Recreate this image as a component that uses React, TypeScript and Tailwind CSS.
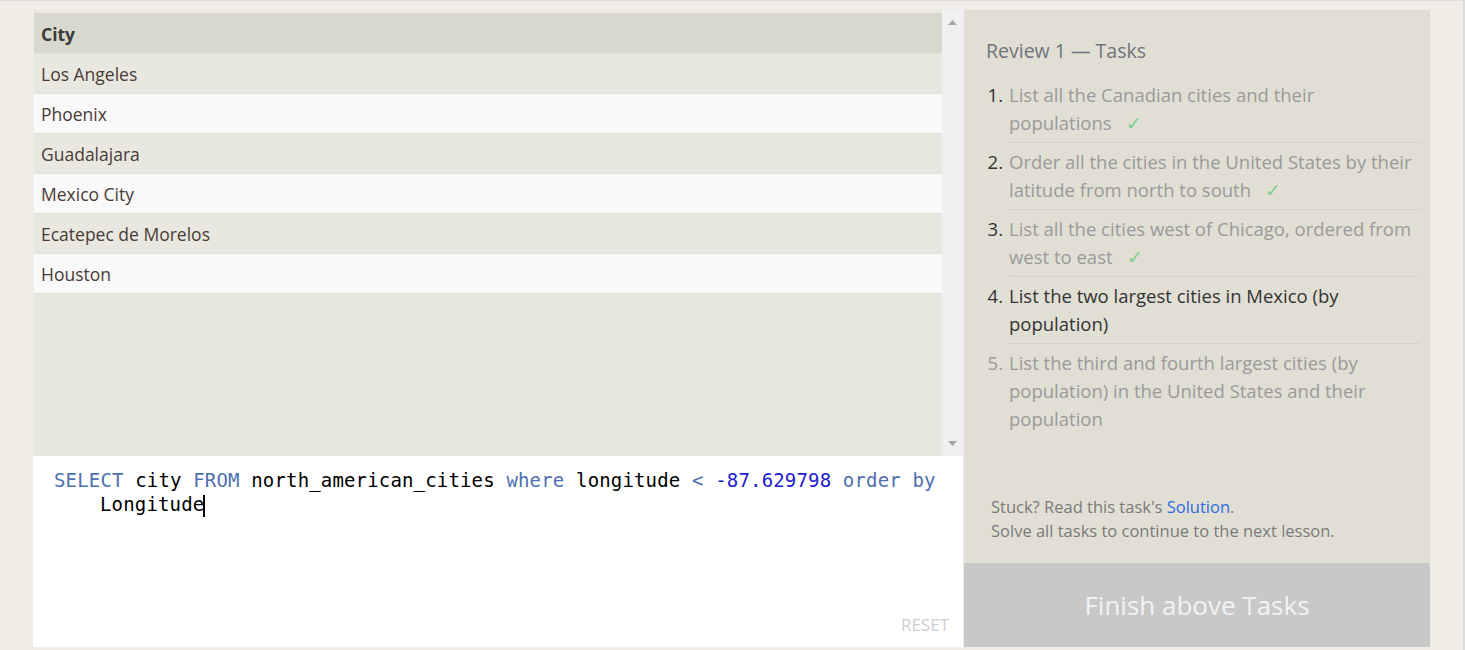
import React from "react";

const rows = ["Los Angeles", "Phoenix", "Guadalajara", "Mexico City", "Ecatepec de Morelos", "Houston"];

const tasks: { text: string; done: boolean; current?: boolean }[] = [
  { text: "List all the Canadian cities and their populations", done: true },
  { text: "Order all the cities in the United States by their latitude from north to south", done: true },
  { text: "List all the cities west of Chicago, ordered from west to east", done: true },
  { text: "List the two largest cities in Mexico (by population)", done: false, current: true },
  { text: "List the third and fourth largest cities (by population) in the United States and their population", done: false },
];

const sans = "font-['Open_Sans',sans-serif]";

export default function App() {
  return (
    <div className={`w-[1465px] h-[650px] bg-[#efede6] border-t border-[#dcdcdc] flex ${sans}`}>
      <div className="flex-1 flex pt-[9px] pl-[33px]">
        {/* Left column */}
        <div className="w-[930px] h-[637px] flex flex-col">
          <div className="h-[446px] flex">
            <div className="w-[909px] bg-[#e9e8e0] pt-[3px] border-l border-[#eeede6] flex flex-col">
              <div className="h-[41px] bg-[#d9d8cc] flex items-center pt-[2px] px-[7px] text-[17.5px] font-bold text-[#3a3a3a] border-b border-[#e2e1d9]">
                City
              </div>
              {rows.map((r, i) => (
                <div
                  key={r}
                  className={`h-[40px] flex items-center pt-[2px] px-[7px] text-[17.5px] text-[#4a3b36] border-b border-[#dfded7] ${
                    i % 2 === 0 ? "bg-[#e9e8e0]" : "bg-[#f9f9f9]"
                  }`}
                >
                  {r}
                </div>
              ))}
            </div>
            <div className="w-[21px] bg-[#f0f0f0] flex flex-col items-center justify-between py-[10px]">
              <svg width="9" height="5" viewBox="0 0 9 5">
                <polygon points="4.5,0 9,5 0,5" fill="#a3a3a3" />
              </svg>
              <svg width="9" height="5" viewBox="0 0 9 5">
                <polygon points="0,0 9,0 4.5,5" fill="#a3a3a3" />
              </svg>
            </div>
          </div>
          <div className="flex-1 bg-white relative pl-[21px] pt-[12px] font-['DejaVu_Sans_Mono',monospace] text-[19px] tracking-[0.16px] leading-[24px]">
            <div className="pl-[46px] -indent-[46px] pr-[6px]">
              <span className="text-[#4d6fae]">SELECT</span> <span className="text-black">city</span>{" "}
              <span className="text-[#4d6fae]">FROM</span> <span className="text-black">north_american_cities</span>{" "}
              <span className="text-[#4d6fae]">where</span> <span className="text-black">longitude</span>{" "}
              <span className="text-[#4d6fae]">&lt;</span> <span className="text-[#1c1cd0]">-87.629798</span>{" "}
              <span className="text-[#4d6fae]">order</span> <span className="text-[#4d6fae]">by</span>{" "}
              <span className="text-black">Longitude</span>
              <span className="inline-block w-[2px] h-[22px] bg-black align-middle -ml-[1px]"></span>
            </div>
            <div className={`absolute right-[14px] bottom-[10px] text-[17px] tracking-normal text-[#cfcfcf] ${sans}`}>RESET</div>
          </div>
        </div>
        {/* Right column */}
        <div className="w-[466px] h-[637px] ml-[1px] bg-[#e1dfd4] flex flex-col">
          <div className="flex-1 pl-[22px] pr-[10px] pt-[26px]">
            <div className="text-[19.5px] text-[#6f737b] leading-[30px]">Review 1 — Tasks</div>
            <ol className="mt-[10px]">
              {tasks.map((t, i) => (
                <li key={i} className="flex">
                  <span
                    className={`w-[23px] shrink-0 text-right pr-[6px] pt-[5px] text-[18.5px] leading-[28px] ${
                      i < 4 ? "text-[#333]" : "text-[#9a9a9a]"
                    }`}
                  >
                    {i + 1}.
                  </span>
                  <div
                    className={`flex-1 py-[5px] text-[18.5px] leading-[28px] ${
                      i < tasks.length - 1 ? "border-b border-[#d5d3c8]" : ""
                    } ${t.current ? "text-[#333]" : "text-[#9a9a9a]"}`}
                  >
                    {t.text}
                    {t.done && <span className="text-[#7fcf8e] ml-[14px]">✓</span>}
                  </div>
                </li>
              ))}
            </ol>
          </div>
          <div className="pl-[27px] pb-[20px] text-[16.5px] leading-[24px] text-[#7a7a7a]">
            <div>
              Stuck? Read this task's <span className="text-[#2d6ce0]">Solution</span>.
            </div>
            <div>Solve all tasks to continue to the next lesson.</div>
          </div>
          <div className="h-[84px] bg-[#c8c8c8] flex items-center justify-center text-[26px] text-[#f2f2f2]">
            Finish above Tasks
          </div>
        </div>
      </div>
      <div className="w-[2px] bg-[#dcdcdc]"></div>
    </div>
  );
}
